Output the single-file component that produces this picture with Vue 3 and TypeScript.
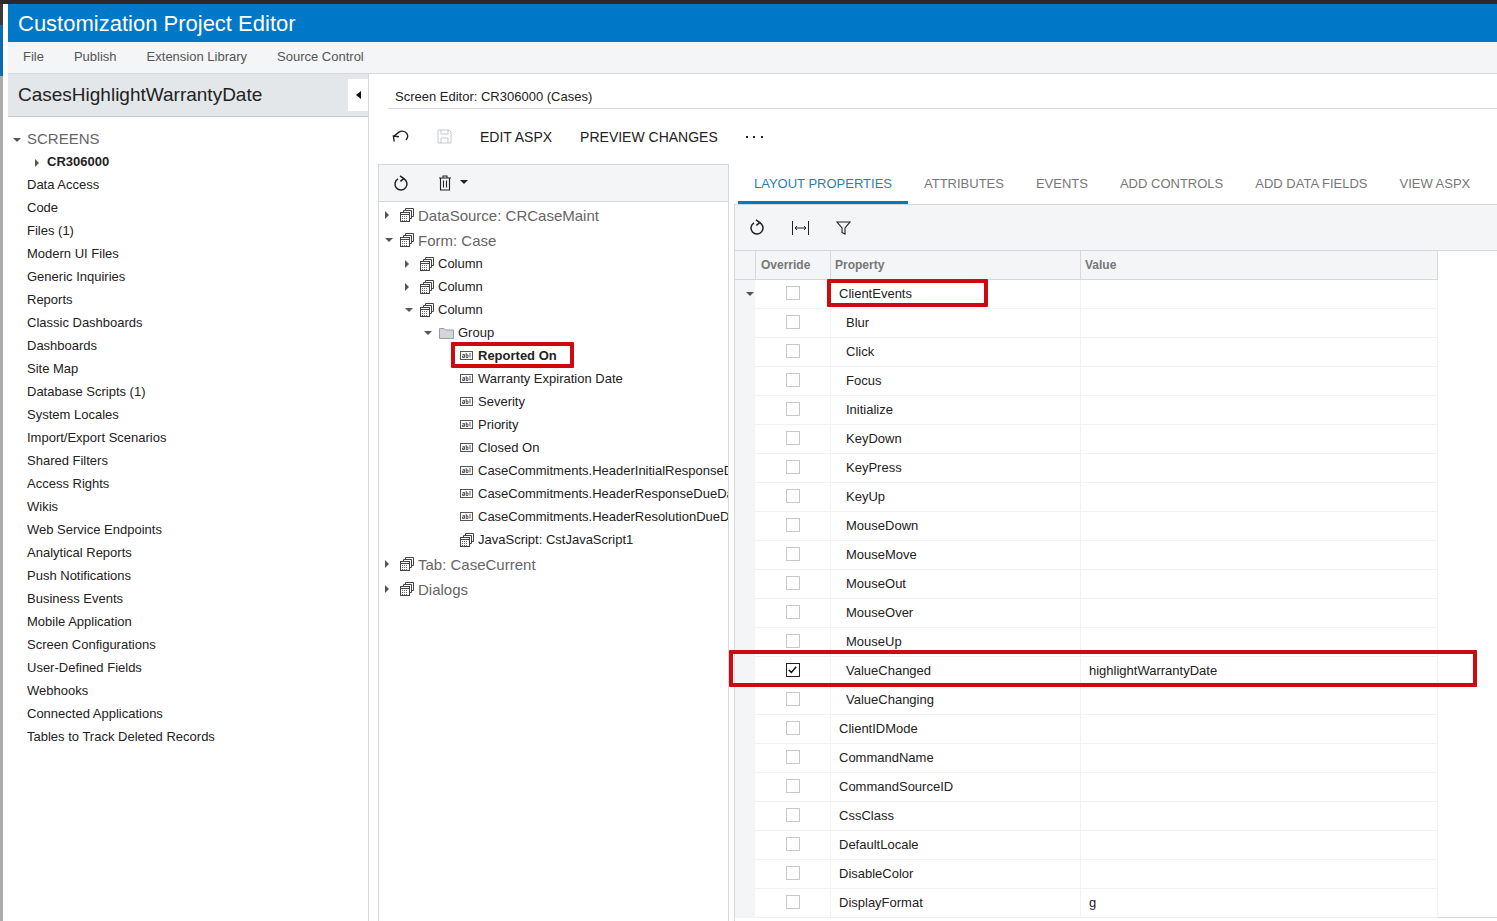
<script setup lang="ts">
const sideItems = [
  'Data Access', 'Code', 'Files (1)', 'Modern UI Files', 'Generic Inquiries', 'Reports',
  'Classic Dashboards', 'Dashboards', 'Site Map', 'Database Scripts (1)', 'System Locales',
  'Import/Export Scenarios', 'Shared Filters', 'Access Rights', 'Wikis', 'Web Service Endpoints',
  'Analytical Reports', 'Push Notifications', 'Business Events', 'Mobile Application',
  'Screen Configurations', 'User-Defined Fields', 'Webhooks', 'Connected Applications',
  'Tables to Track Deleted Records',
]

type TreeRow = { label: string; level: number; arrow?: 'open' | 'closed'; icon: 'stack' | 'field' | 'folder'; big?: boolean; marked?: boolean }

const treeRows: TreeRow[] = [
  { label: 'DataSource: CRCaseMaint', level: 0, arrow: 'closed', icon: 'stack', big: true },
  { label: 'Form: Case', level: 0, arrow: 'open', icon: 'stack', big: true },
  { label: 'Column', level: 1, arrow: 'closed', icon: 'stack' },
  { label: 'Column', level: 1, arrow: 'closed', icon: 'stack' },
  { label: 'Column', level: 1, arrow: 'open', icon: 'stack' },
  { label: 'Group', level: 2, arrow: 'open', icon: 'folder' },
  { label: 'Reported On', level: 3, icon: 'field', marked: true },
  { label: 'Warranty Expiration Date', level: 3, icon: 'field' },
  { label: 'Severity', level: 3, icon: 'field' },
  { label: 'Priority', level: 3, icon: 'field' },
  { label: 'Closed On', level: 3, icon: 'field' },
  { label: 'CaseCommitments.HeaderInitialResponseDueDateTime', level: 3, icon: 'field' },
  { label: 'CaseCommitments.HeaderResponseDueDateTime', level: 3, icon: 'field' },
  { label: 'CaseCommitments.HeaderResolutionDueDateTime', level: 3, icon: 'field' },
  { label: 'JavaScript: CstJavaScript1', level: 3, icon: 'stack' },
  { label: 'Tab: CaseCurrent', level: 0, arrow: 'closed', icon: 'stack', big: true },
  { label: 'Dialogs', level: 0, arrow: 'closed', icon: 'stack', big: true },
]

const tabs = ['LAYOUT PROPERTIES', 'ATTRIBUTES', 'EVENTS', 'ADD CONTROLS', 'ADD DATA FIELDS', 'VIEW ASPX']

type PropRow = { name: string; value?: string; child?: boolean; checked?: boolean; open?: boolean }

const propRows: PropRow[] = [
  { name: 'ClientEvents', open: true },
  ...['Blur', 'Click', 'Focus', 'Initialize', 'KeyDown', 'KeyPress', 'KeyUp', 'MouseDown', 'MouseMove', 'MouseOut', 'MouseOver', 'MouseUp']
    .map((name) => ({ name, child: true })),
  { name: 'ValueChanged', child: true, checked: true, value: 'highlightWarrantyDate' },
  { name: 'ValueChanging', child: true },
  { name: 'ClientIDMode' },
  { name: 'CommandName' },
  { name: 'CommandSourceID' },
  { name: 'CssClass' },
  { name: 'DefaultLocale' },
  { name: 'DisableColor' },
  { name: 'DisplayFormat', value: 'g' },
]
</script>

<template>
  <div class="page">
    <header class="title-bar">Customization Project Editor</header>
    <nav class="menu-bar">
      <span>File</span>
      <span>Publish</span>
      <span>Extension Library</span>
      <span>Source Control</span>
    </nav>

    <div class="body">
      <aside class="sidebar">
        <div class="side-head">
          <span>CasesHighlightWarrantyDate</span>
          <button class="collapse"><i class="tri tri-left"></i></button>
        </div>
        <div class="side-tree">
          <div class="screens"><i class="tri tri-down"></i>SCREENS</div>
          <div class="screen-id"><i class="tri tri-right"></i>CR306000</div>
          <div v-for="item in sideItems" :key="item" class="side-item">{{ item }}</div>
        </div>
      </aside>

      <main class="main">
        <div class="editor-title">Screen Editor: CR306000 (Cases)</div>
        <div class="editor-tools">
          <svg class="ico undo" width="18" height="14" viewBox="0 0 18 14" fill="none" stroke="#222" stroke-width="1.4">
            <path d="M2.2 11.5 L1.4 6 L7 6.8" />
            <path d="M1.8 6.4 L6.5 2.4 C9.5 .6 13 1 14.8 3.4 C16.2 5.6 15.6 8.2 14 10" />
          </svg>
          <svg class="ico save" width="15" height="15" viewBox="0 0 15 15" fill="none" stroke="#c4c8cc" stroke-width="1">
            <path d="M1 1 H12 L14 3 V14 H1 Z" />
            <path d="M4 1 V5 H11 V1 M4 14 V9 H11 V14" />
          </svg>
          <span class="tool-text">EDIT ASPX</span>
          <span class="tool-text">PREVIEW CHANGES</span>
          <span class="dots"><i></i><i></i><i></i></span>
        </div>

        <div class="split">
          <section class="tree-pane">
            <div class="tree-tools">
              <svg width="16" height="17" viewBox="0 0 16 17" fill="none" stroke="#222" stroke-width="1.5">
                <path d="M10.6 3.6 A6 6 0 1 1 5 3.8" />
                <path d="M7 .8 L10.8 3.6 L7.4 6.4" />
              </svg>
              <svg class="trash" width="12" height="16" viewBox="0 0 12 16" fill="none" stroke="#222" stroke-width="1.1">
                <path d="M0 3 H12 M4 3 V1 H8 V3 M1.5 3 V15 H10.5 V3 M4.5 5.5 V12.5 M7.5 5.5 V12.5" />
              </svg>
              <i class="tri tri-down trash-caret"></i>
            </div>
            <div class="tree-list">
              <div
                v-for="(row, i) in treeRows"
                :key="i"
                class="tree-row"
                :class="[`lvl-${row.level}`, { big: row.big }]"
              >
                <span class="arrow-slot"><i v-if="row.arrow" class="tri" :class="row.arrow === 'open' ? 'tri-down' : 'tri-right'"></i></span>
                <svg v-if="row.icon === 'stack'" class="node" width="14" height="14" viewBox="0 0 14 14" fill="#fff" stroke="#444" stroke-width="1">
                  <path d="M5.5 2.5 V.5 H13.5 V8.5 H11.5" />
                  <path d="M3.5 4.5 V2.5 H11.5 V10.5 H9.5" />
                  <rect x=".5" y="4.5" width="9" height="9" />
                  <path d="M.5 6.5 H9.5" />
                  <path d="M2 8.5 H8 M2 10.5 H8 M2 12.5 H8" stroke-dasharray="1 1" stroke="#666" />
                </svg>
                <svg v-else-if="row.icon === 'field'" class="node field" width="13" height="9" viewBox="0 0 13 9" fill="#fff" stroke="#555" stroke-width="1">
                  <rect x=".5" y=".5" width="12" height="8" />
                  <path d="M2.5 3.5 H4.5 V6.5 H2.5 V5 H4.5 M6.2 2 V6.5 H8 V4 H6.2 M10 2 V6.5" stroke="#333" stroke-width=".8" fill="none" />
                </svg>
                <svg v-else class="node" width="15" height="12" viewBox="0 0 15 12" fill="#d4d6d9" stroke="#9a9da1" stroke-width="1">
                  <path d="M.5 11.5 V1.5 H5 L6.5 3 H14.5 V11.5 Z" />
                </svg>
                <span class="tree-label" :class="{ bold: row.marked }">{{ row.label }}</span>
              </div>
            </div>
            <div class="mark mark-reported"></div>
          </section>

          <section class="prop-pane">
            <div class="tabs">
              <span v-for="(tab, i) in tabs" :key="tab" class="tab" :class="{ active: i === 0 }">{{ tab }}</span>
            </div>
            <div class="grid-box">
              <div class="grid-tools">
                <svg width="16" height="17" viewBox="0 0 16 17" fill="none" stroke="#222" stroke-width="1.5">
                  <path d="M10.6 3.6 A6 6 0 1 1 5 3.8" />
                  <path d="M7 .8 L10.8 3.6 L7.4 6.4" />
                </svg>
                <svg width="17" height="14" viewBox="0 0 17 14" fill="none" stroke="#222" stroke-width="1">
                  <path d="M.5 0 V14 M16.5 0 V14 M3 7 H14 M5 5 L3 7 L5 9 M12 5 L14 7 L12 9" />
                </svg>
                <svg width="15" height="14" viewBox="0 0 15 14" fill="none" stroke="#222" stroke-width="1.1">
                  <path d="M1 1 H14 L9 7 V13 L6 11.5 V7 Z" />
                </svg>
              </div>
              <div class="grid-head">
                <div class="c-gutter"></div>
                <div class="c-over">Override</div>
                <div class="c-prop">Property</div>
                <div class="c-val">Value</div>
              </div>
              <div v-for="row in propRows" :key="row.name" class="grid-row">
                <div class="c-gutter"><i v-if="row.open" class="tri tri-down"></i></div>
                <div class="c-over">
                  <span class="check" :class="{ on: row.checked }">
                    <svg v-if="row.checked" width="9" height="8" viewBox="0 0 9 8" fill="none" stroke="#111" stroke-width="1.5"><path d="M.8 4 L3.4 6.4 L8.2 .8" /></svg>
                  </span>
                </div>
                <div class="c-prop" :class="{ child: row.child }">{{ row.name }}</div>
                <div class="c-val">{{ row.value }}</div>
              </div>
              <div class="grid-foot">For a more than the name of the control</div>
            </div>
            <div class="mark mark-client"></div>
            <div class="mark mark-value"></div>
          </section>
        </div>
      </main>
    </div>
  </div>
</template>

<style>
html, body { margin: 0; height: 100%; overflow: hidden; background: #fff; }
</style>

<style scoped>
.page {
  height: 921px;
  box-sizing: border-box;
  padding: 4px 0 0 8px;
  overflow: hidden;
  position: relative;
  font-family: "Liberation Sans", Arial, sans-serif;
  font-size: 13px;
  color: #222;
  background: #fff;
  display: flex;
  flex-direction: column;
}
.page::before {
  content: "";
  position: absolute;
  left: 0; right: 0; top: 0;
  height: 4px;
  background: #2a2a2a;
}
.page::after {
  content: "";
  position: absolute;
  left: 0; top: 4px; bottom: 0;
  width: 3px;
  background: linear-gradient(#3a3a3a 0 21px, #0a6db0 21px 72px, #ababab 72px);
}
.title-bar {
  height: 38px;
  flex: none;
  box-sizing: border-box;
  background: #0078c8;
  color: #fff;
  font-size: 22px;
  line-height: 38px;
  padding: 1px 0 0 10px;
}
.menu-bar {
  height: 32px;
  flex: none;
  box-sizing: border-box;
  background: #f3f5f7;
  border-bottom: 1px solid #d6d9dc;
  display: flex;
  gap: 30px;
  align-items: center;
  padding: 0 0 2px 15px;
  color: #555;
}
.body { flex: 1; display: flex; min-height: 0; }
.sidebar {
  width: 360px;
  flex: none;
  border-right: 1px solid #d6d9dc;
}
.side-head {
  height: 42px;
  background: #e3e7ea;
  border-bottom: 1px solid #c6c9cc;
  display: flex;
  align-items: center;
  justify-content: space-between;
  padding-left: 10px;
  font-size: 19px;
}
.collapse {
  width: 20px;
  height: 32px;
  padding: 0;
  border: 0;
  background: #fff;
  display: flex;
  align-items: center;
  justify-content: center;
}
.side-tree { padding-top: 9px; }
.screens {
  height: 24px;
  line-height: 23px;
  font-size: 15px;
  color: #666;
  padding-left: 5px;
  display: flex;
  align-items: center;
}
.screens .tri { margin-right: 6px; margin-top: 4px; }
.screen-id {
  height: 23px;
  line-height: 23px;
  font-weight: 700;
  padding-left: 27px;
  display: flex;
  align-items: center;
}
.screen-id .tri { margin-right: 8px; margin-top: 2px; }
.side-item { height: 23px; line-height: 23px; padding-left: 19px; }

.tri { display: inline-block; width: 0; height: 0; flex: none; }
.tri-down { border-left: 4px solid transparent; border-right: 4px solid transparent; border-top: 4px solid #555; }
.tri-right { border-top: 4px solid transparent; border-bottom: 4px solid transparent; border-left: 4px solid #555; }
.tri-left { border-top: 4px solid transparent; border-bottom: 4px solid transparent; border-right: 5px solid #111; }

.main { flex: 1; min-width: 0; padding-left: 9px; display: flex; flex-direction: column; }
.editor-title {
  margin: 0 0 0 10px;
  height: 35px;
  box-sizing: border-box;
  padding: 15px 0 0 7px;
  line-height: 16px;
  border-bottom: 1px solid #d6d9dc;
}
.editor-tools {
  height: 55px;
  flex: none;
  display: flex;
  align-items: center;
  padding-left: 14px;
  font-size: 14px;
}
.ico { flex: none; }
.save { margin-left: 27px; }
.tool-text { margin-left: 28px; }
.dots { display: flex; gap: 5.5px; margin-left: 28px; }
.dots i { width: 2px; height: 2px; background: #222; }

.split { flex: 1; min-height: 0; display: flex; gap: 5px; }
.tree-pane {
  position: relative;
  width: 351px;
  box-sizing: border-box;
  flex: none;
  border: 1px solid #d6d9dc;
  border-bottom: 0;
  overflow: hidden;
}
.tree-tools {
  height: 37px;
  box-sizing: border-box;
  background: #f3f5f7;
  border-bottom: 1px solid #d6d9dc;
  display: flex;
  align-items: center;
  padding-left: 14px;
}
.trash { margin-left: 30px; }
.trash-caret { margin-left: 9px; margin-top: -2px; border-top-color: #222; }
.tree-row { height: 23px; display: flex; align-items: center; white-space: nowrap; }
.tree-row.big { height: 24px; margin-top: 1px; font-size: 15px; color: #666; }
.lvl-0 { padding-left: 6px; }
.lvl-1 { padding-left: 26px; }
.lvl-2 { padding-left: 45px; }
.lvl-3 { padding-left: 61px; }
.arrow-slot { width: 15px; flex: none; display: flex; align-items: center; }
.lvl-3 .arrow-slot { width: 20px; }
.node { flex: none; margin-right: 4px; }
.node.field { margin-right: 5px; }
.bold { font-weight: 700; }

.prop-pane { position: relative; flex: 1; min-width: 0; }
.tabs {
  height: 40px;
  display: flex;
  padding-left: 4px;
  color: #777;
  white-space: nowrap;
}
.tab {
  padding: 0 16px;
  line-height: 40px;
  height: 40px;
  box-sizing: border-box;
}
.tab.active { color: #1f7fbf; border-bottom: 3px solid #0078c8; }
.grid-box { border: 1px solid #d6d9dc; border-width: 1px 0 0 1px; }
.grid-tools {
  height: 46px;
  box-sizing: border-box;
  background: #f3f5f7;
  border-bottom: 1px solid #d6d9dc;
  display: flex;
  align-items: center;
  gap: 27px;
  padding-left: 14px;
}
.grid-head, .grid-row {
  display: grid;
  grid-template-columns: 20px 75px 250px 358px;
  width: 703px;
  height: 29px;
  box-sizing: border-box;
}
.grid-head {
  font-size: 12px;
  font-weight: 700;
  color: #777;
  background: #f3f5f7;
  border-bottom: 1px solid #d6d9dc;
}
.grid-head > div {
  border-left: 1px solid #d6d9dc;
  line-height: 28px;
  padding-left: 4px;
}
.grid-head > .c-over { padding-left: 5px; }
.grid-head > .c-gutter { border-left: 0; }
.grid-head > .c-val { border-right: 1px solid #d6d9dc; }
.grid-row > div { border-bottom: 1px solid #f1f2f3; line-height: 28px; }
.grid-row .c-gutter {
  background: #f3f5f7;
  border-bottom-color: #f3f5f7;
  display: flex;
  align-items: center;
  justify-content: flex-end;
  padding-right: 1px;
}
.grid-row .c-over { display: flex; justify-content: center; align-items: center; padding: 0 0 3px; box-sizing: border-box; }
.grid-row .c-prop { border-left: 1px solid #f1f2f3; padding-left: 8px; }
.grid-row .c-prop.child { padding-left: 15px; }
.grid-row .c-val { border-left: 1px solid #f1f2f3; border-right: 1px solid #f1f2f3; padding-left: 8px; }
.check {
  width: 12px;
  height: 12px;
  box-sizing: content-box;
  border: 1px solid #c8c8c8;
  display: flex;
  align-items: center;
  justify-content: center;
  background: #fff;
}
.check.on { border-color: #222; }
.grid-foot { border-top: 1px solid #d6d9dc; padding-left: 4px; font-size: 12px; color: #444; line-height: 16px; margin-top: -1px; }

.mark {
  position: absolute;
  box-sizing: border-box;
  border: 4px solid #cc0a0f;
  border-radius: 1px;
  pointer-events: none;
}
.mark-reported { left: 72px; top: 177px; width: 123px; height: 26px; }
.mark-client { left: 93px; top: 115px; width: 161px; height: 28px; }
.mark-value { left: -5px; top: 486px; width: 748px; height: 37px; }
</style>
